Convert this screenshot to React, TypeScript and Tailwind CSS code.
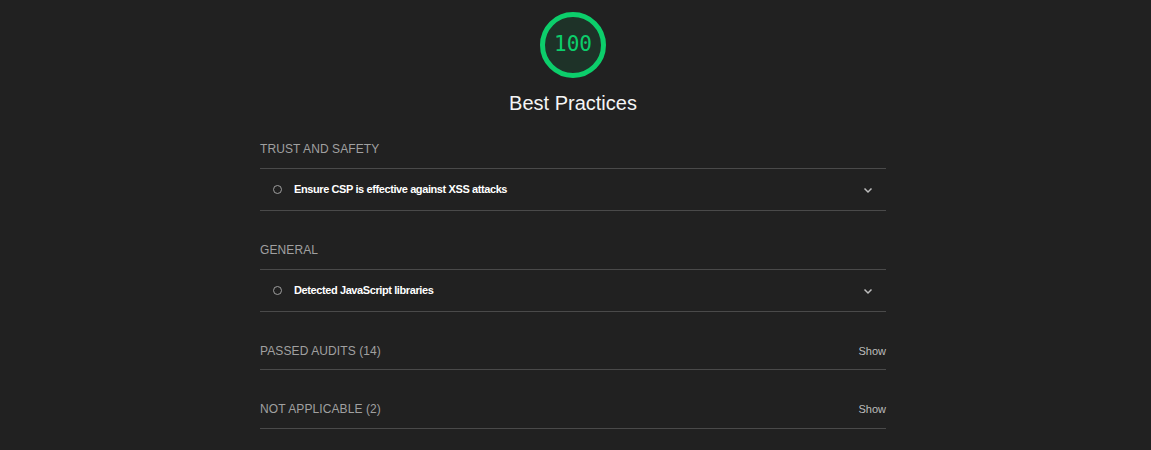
import React from 'react';

const groups = [
  { title: 'Trust and Safety', audits: ['Ensure CSP is effective against XSS attacks'], pt: 'pt-[26px]' },
  { title: 'General', audits: ['Detected JavaScript libraries'], pt: 'pt-[31px]' },
];

const clumps = [
  { label: 'Passed audits (14)', pb: 'pb-[10px]' },
  { label: 'Not applicable (2)', pb: 'pb-[11px]' },
];

const Gauge = () => (
  <div className="relative w-[66px] h-[66px]">
    <svg width="66" height="66" viewBox="0 0 66 66">
      <circle cx="33" cy="33" r="30.5" fill="rgba(12,206,107,0.1)" stroke="#0cce6b" strokeWidth="5" />
    </svg>
    <div className="absolute inset-0 flex items-center justify-center text-[21px] text-[#0cce6b] font-['DejaVu_Sans_Mono',monospace]">
      100
    </div>
  </div>
);

const Chevron = () => (
  <svg width="10" height="10" viewBox="0 0 10 10" className="text-[#bdbdbd]">
    <path d="M1.5 3.5 L5 7 L8.5 3.5" fill="none" stroke="currentColor" strokeWidth="1.5" />
  </svg>
);

export default function App() {
  return (
    <div className="min-h-[450px] bg-[#212121] pr-[5px] font-['Liberation_Sans',Arial,sans-serif]">
      <div className="w-[626px] mx-auto">
        <div className="flex flex-col items-center pt-[12px]">
          <Gauge />
          <div className="mt-[13px] text-[20px] leading-[24px] text-[#f5f5f5]">Best Practices</div>
        </div>

        {groups.map((g) => (
          <div key={g.title}>
            <div className={`${g.pt} pb-[11px] border-b border-[#4a4a4a] text-[12px] leading-[16px] uppercase tracking-[0.1px] text-[#a0a0a0]`}>
              {g.title}
            </div>
            {g.audits.map((a) => (
              <div key={a} className="h-[42px] flex items-center border-b border-[#4a4a4a] pl-[13px] pr-[13px]">
                <span className="w-[9px] h-[9px] rounded-full border border-[#9e9e9e] shrink-0" />
                <span className="ml-[12px] flex-1 text-[11px] font-bold tracking-[-0.4px] text-white">{a}</span>
                <Chevron />
              </div>
            ))}
          </div>
        ))}

        {clumps.map((c) => (
          <div
            key={c.label}
            className={`pt-[31px] ${c.pb} border-b border-[#4a4a4a] flex items-center justify-between text-[12px] leading-[16px]`}
          >
            <span className="uppercase tracking-[0.1px] text-[#a0a0a0]">{c.label}</span>
            <span className="text-[11px] text-[#bdbdbd]">Show</span>
          </div>
        ))}
      </div>
    </div>
  );
}
